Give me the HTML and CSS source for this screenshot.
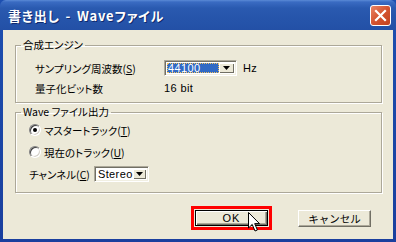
FILE: index.html
```html
<!DOCTYPE html>
<html lang="ja">
<head>
    <meta charset="UTF-8">
    <title>書き出し - Waveファイル</title>
    <link rel="stylesheet" href="styles.css">
</head>
<body>
    <div class="window">
        <div class="titlebar">
            <span class="title">書き出し - Waveファイル</span>
            <span class="close-btn">
                <svg width="13" height="13" viewBox="0 0 13 13">
                    <path d="M2 2 L11 11 M11 2 L2 11" stroke="#fff" stroke-width="2.2" stroke-linecap="square"/>
                </svg>
            </span>
        </div>

        <div class="client">
            <fieldset class="group group-engine">
                <legend>合成エンジン</legend>
                <div class="group-body engine-grid">
                    <span>サンプリング周波数(<u>S</u>)</span>
                    <div class="rate-cell">
                        <div class="combo combo-rate">
                            <span class="combo-text selected">44100</span>
                            <span class="combo-btn">
                                <svg width="7" height="4" viewBox="0 0 7 4"><path d="M0 0 H7 L3.5 4 Z" fill="#000"/></svg>
                            </span>
                        </div>
                        <span class="unit">Hz</span>
                    </div>
                    <span>量子化ビット数</span>
                    <span class="unit">16 bit</span>
                </div>
            </fieldset>

            <fieldset class="group group-output">
                <legend>Wave ファイル出力</legend>
                <div class="group-body output-list">
                    <label class="radio-row">
                        <span class="radio checked"></span>
                        <span>マスタートラック(<u>T</u>)</span>
                    </label>
                    <label class="radio-row">
                        <span class="radio"></span>
                        <span>現在のトラック(<u>U</u>)</span>
                    </label>
                    <div class="channel-row">
                        <span>チャンネル(<u>C</u>)</span>
                        <div class="combo combo-channel">
                            <span class="combo-text">Stereo</span>
                            <span class="combo-btn">
                                <svg width="7" height="4" viewBox="0 0 7 4"><path d="M0 0 H7 L3.5 4 Z" fill="#000"/></svg>
                            </span>
                        </div>
                    </div>
                </div>
            </fieldset>

            <div class="buttons">
                <div class="highlight">
                    <button class="btn btn-default">OK</button>
                    <svg class="cursor" width="13" height="22" viewBox="0 0 13 22">
                        <path d="M0.5 0.5 V16 L4.2 12.4 L7 19 L9.4 18 L6.7 11.6 H11.5 Z" fill="#fff" stroke="#000" stroke-width="1"/>
                    </svg>
                </div>
                <button class="btn">キャンセル</button>
            </div>
        </div>
    </div>
</body>
</html>
```

FILE: styles.css
```css
/* Dialog frame */
body {
    margin: 0;
    padding: 0;
    font-family: "Noto Sans CJK JP", "Noto Sans", sans-serif;
    font-feature-settings: "palt";
    font-size: 10.5px;
    color: #000;
}

.window {
    width: 396px;
    height: 242px;
    display: flex;
    flex-direction: column;
    background: linear-gradient(180deg, #1d4fb0, #1a3f9e);
    box-sizing: border-box;
    padding: 0 3px 3px 3px;
}

.titlebar {
    height: 30px;
    margin: 0 -3px;
    padding: 0 5px 0 8px;
    display: flex;
    align-items: center;
    justify-content: space-between;
    background: linear-gradient(180deg, #5b8ad6 0, #3a6bc2 2px, #2a5ab0 8px, #2655ab 60%, #2350a6 100%);
    border-radius: 6px 6px 0 0;
}

.title {
    color: #fff;
    font-weight: bold;
    font-size: 13px;
    text-shadow: 1px 1px 0 #0f2a6e;
    letter-spacing: 0.8px;
    word-spacing: 2px;
}

.close-btn {
    width: 19px;
    height: 19px;
    display: flex;
    align-items: center;
    justify-content: center;
    border: 1px solid #fff;
    border-radius: 3px;
    background: linear-gradient(135deg, #ea8566, #d4532f 50%, #c2421f);
    margin-top: 1px;
}

.client {
    flex: 1;
    background-color: #ece9d8;
    padding: 8px 11px 0 12px;
}

/* Group boxes */
.group {
    margin: 0;
    padding: 0;
    border: 1px solid #aca899;
    box-shadow: 1px 1px 0 #fff, inset 1px 1px 0 #fff;
    min-width: 0;
}

.group legend {
    margin-left: 5px;
    padding: 0 2px;
    line-height: 14px;
}

.group-output {
    margin-top: 2px;
}

.engine-grid {
    display: grid;
    grid-template-columns: 129px auto;
    grid-auto-rows: 16px;
    row-gap: 4px;
    align-items: center;
    padding: 8px 0 6px 19px;
}

.rate-cell {
    display: flex;
    align-items: center;
    gap: 6px;
}

.output-list {
    display: flex;
    flex-direction: column;
    padding: 4px 0 10px 13px;
}

.radio-row {
    display: flex;
    align-items: center;
    gap: 3px;
    height: 14px;
}

.radio-row + .radio-row {
    margin-top: 8px;
}

.radio {
    width: 12px;
    height: 12px;
    border-radius: 50%;
    background: #fff;
    box-sizing: border-box;
    border: 1px solid;
    border-color: #808080 #fff #fff #808080;
    box-shadow: inset 1px 1px 0 #404040, inset -1px -1px 0 #d4d0c8;
    display: flex;
    align-items: center;
    justify-content: center;
}

.radio.checked::after {
    content: "";
    width: 4px;
    height: 4px;
    border-radius: 50%;
    background: #000;
}

.channel-row {
    display: flex;
    align-items: center;
    gap: 4px;
    margin-top: 7px;
    height: 16px;
}

/* Combo boxes */
.combo {
    display: flex;
    height: 16px;
    box-sizing: border-box;
    background: #fff;
    border: 1px solid;
    border-color: #aca899 #fff #fff #aca899;
    box-shadow: inset 1px 1px 0 #716f64, inset -1px -1px 0 #f1efe2;
    padding: 2px;
}

.combo-rate {
    width: 73px;
}

.combo-channel {
    width: 55px;
}

.combo-text {
    flex: 1;
    display: flex;
    align-items: center;
    padding-left: 1px;
    font-family: "Liberation Sans", Arial, sans-serif;
    font-size: 11px;
    letter-spacing: 0.4px;
}

.combo-text.selected {
    background: #316ac5;
    color: #fff;
    outline: 1px dotted #f0c060;
    outline-offset: -1px;
}

.combo-btn {
    width: 15px;
    display: flex;
    align-items: center;
    justify-content: center;
    background: #ece9d8;
    box-sizing: border-box;
    box-shadow: inset 1px 1px 0 #fff, inset -1px -1px 0 #716f64;
}

.unit {
    font-family: "Liberation Sans", Arial, sans-serif;
    font-size: 11px;
    letter-spacing: 0.4px;
}

/* Buttons */
.buttons {
    display: flex;
    justify-content: flex-end;
    align-items: center;
    gap: 26px;
    margin-top: 13px;
    padding-right: 11px;
}

.highlight {
    position: relative;
    border: 3px solid #ff0000;
    padding: 1px;
    display: flex;
}

.btn {
    width: 73px;
    height: 17px;
    padding: 0;
    font-family: inherit;
    font-size: 10.5px;
    background: #ece9d8;
    border: 1px solid;
    border-color: #fff #716f64 #716f64 #fff;
    box-shadow: inset -1px -1px 0 #aca899;
    color: #000;
}

.btn-default {
    height: 16px;
    border: 1px solid #000;
    box-shadow: inset 1px 1px 0 #fff, inset -1px -1px 0 #716f64, inset -2px -2px 0 #aca899;
    font-family: "Liberation Sans", Arial, sans-serif;
    font-size: 11px;
    letter-spacing: 1px;
}

.cursor {
    position: absolute;
    left: 54px;
    top: 3px;
}
```
